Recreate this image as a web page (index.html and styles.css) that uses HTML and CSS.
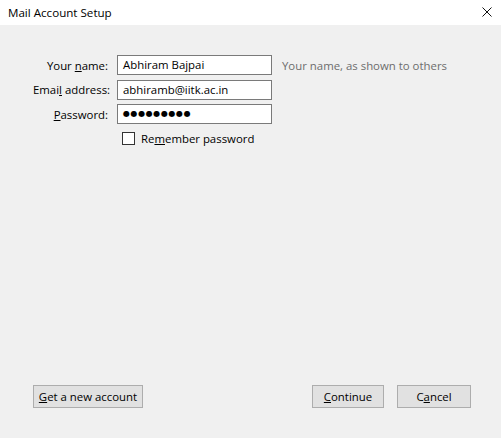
FILE: index.html
```html
<!DOCTYPE html>
<html>
<head>
<meta charset="utf-8">
<link rel="stylesheet" href="styles.css">
</head>
<body>
<div class="window">
  <div class="titlebar">
    <span class="title">Mail Account Setup</span>
    <svg class="close" width="10" height="10" viewBox="0 0 10 10"><path d="M0.5 0.5 L9.5 9.5 M9.5 0.5 L0.5 9.5" stroke="#111" stroke-width="1"/></svg>
  </div>
  <div class="content">
    <div class="form">
      <label class="lbl">Your <u>n</u>ame:</label>
      <div class="field">Abhiram Bajpai</div>
      <span class="hint">Your name, as shown to others</span>

      <label class="lbl">Emai<u>l</u> address:</label>
      <div class="field">abhiramb@iitk.ac.in</div>
      <span></span>

      <label class="lbl"><u>P</u>assword:</label>
      <div class="field dots">●●●●●●●●●</div>
      <span></span>

      <span></span>
      <div class="check"><span class="box"></span><span>Re<u>m</u>ember password</span></div>
      <span></span>
    </div>
    <div class="buttons">
      <button class="btn wide"><u>G</u>et a new account</button>
      <div class="right">
        <button class="btn cont"><u>C</u>ontinue</button>
        <button class="btn canc">C<u>a</u>ncel</button>
      </div>
    </div>
  </div>
</div>
</body>
</html>
```
FILE: styles.css
```css
* { box-sizing: border-box; }
html, body { margin: 0; padding: 0; }
body {
  width: 501px;
  height: 438px;
  font-family: "Open Sans", "Noto Sans", sans-serif;
  font-size: 11.4px;
  color: #000;
  overflow: hidden;
}
.window { display: flex; flex-direction: column; height: 438px; }
.titlebar {
  height: 25px;
  background: #fff;
  display: flex;
  align-items: center;
  justify-content: space-between;
  padding: 0 9px 1px 8px;
}
.title { font-size: 11.6px; }
.content {
  flex: 1;
  background: #f0f0f0;
  display: flex;
  flex-direction: column;
  justify-content: space-between;
  padding: 30px 30px 30px 33px;
}
.form {
  display: grid;
  grid-template-columns: 75px 155px auto;
  grid-auto-rows: 20px;
  row-gap: 4.5px;
  column-gap: 9px;
  align-items: center;
}
.lbl { text-align: right; white-space: nowrap; }
.field {
  height: 20px;
  border: 1px solid #7a7a7a;
  background: #fff;
  padding: 0 5px;
  line-height: 18px;
  white-space: nowrap;
}
.dots { font-family: "DejaVu Sans", sans-serif; font-size: 8px; letter-spacing: 0.6px; }
.hint { color: #6d6d6d; padding-left: 1px; white-space: nowrap; }
.check { display: flex; align-items: center; gap: 6px; padding-left: 5px; }
.box { width: 13px; height: 13px; border: 1px solid #333; background: #fff; }
.buttons { display: flex; justify-content: space-between; align-items: flex-end; }
.right { display: flex; gap: 13px; }
.btn {
  height: 23px;
  border: 1px solid #adadad;
  background: #e1e1e1;
  font: inherit;
  color: #000;
  padding: 0;
}
.wide { width: 110px; }
.cont { width: 72px; }
.canc { width: 74px; }
```
